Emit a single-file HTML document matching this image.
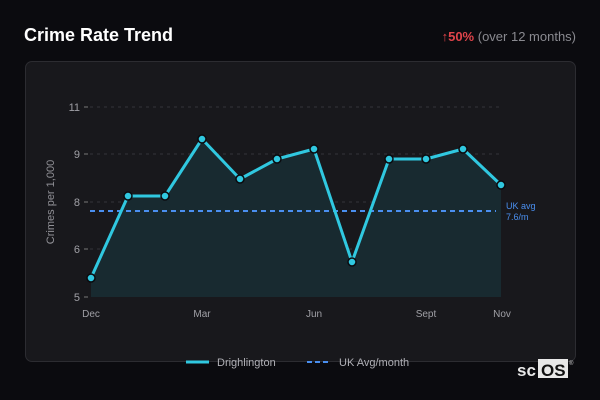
<!DOCTYPE html>
<html><head><meta charset="utf-8"><style>
html,body{margin:0;padding:0;background:#0b0b0f;width:600px;height:400px;overflow:hidden;font-family:"Liberation Sans",sans-serif;}
.t{position:absolute;left:24px;top:25px;color:#fff;font-weight:bold;font-size:18px;}
.r{position:absolute;right:24px;top:29px;font-size:13px;color:#8a8a90;}
.r b{color:#e0444a;}
.card{position:absolute;left:25px;top:61px;width:549px;height:299px;background:#18181c;border:1px solid #2c2c31;border-radius:7px;}
</style></head><body>
<div class="t">Crime Rate Trend</div>
<div class="r"><span style="color:#e0444a">↑</span><b>50%</b> (over 12 months)</div>
<div class="card"></div>
<svg width="600" height="400" style="position:absolute;left:0;top:0" font-family="Liberation Sans, sans-serif">
<g stroke="#34343a" stroke-dasharray="3,4" stroke-width="1">
<line x1="90" y1="107" x2="501" y2="107"/><line x1="90" y1="154" x2="501" y2="154"/><line x1="90" y1="202" x2="501" y2="202"/><line x1="90" y1="249" x2="501" y2="249"/>
</g>
<g stroke="#777" stroke-width="1"><line x1="84" y1="107" x2="88" y2="107"/><line x1="84" y1="154" x2="88" y2="154"/><line x1="84" y1="202" x2="88" y2="202"/><line x1="84" y1="249" x2="88" y2="249"/><line x1="84" y1="297" x2="88" y2="297"/></g>
<g fill="#a0a0a6" font-size="11" text-anchor="end"><text x="80" y="111">11</text><text x="80" y="158">9</text><text x="80" y="206">8</text><text x="80" y="253">6</text><text x="80" y="301">5</text></g>
<text transform="translate(54,202) rotate(-90)" fill="#909096" font-size="11" text-anchor="middle">Crimes per 1,000</text>
<polygon fill="#182a30" points="91,297 91,278 128,196 165,196 202,139 240,179 277,159 314,149 352,262 389,159 426,159 463,149 501,185 501,297"/>
<line x1="90" y1="211" x2="496" y2="211" stroke="#4a8ff0" stroke-width="2" stroke-dasharray="5,4"/>
<polyline fill="none" stroke="#30c8e0" stroke-width="3" stroke-linejoin="round" points="91,278 128,196 165,196 202,139 240,179 277,159 314,149 352,262 389,159 426,159 463,149 501,185"/>
<g fill="#30c8e0" stroke="#0b0b0f" stroke-width="1.5">
<circle cx="91" cy="278" r="4"/><circle cx="128" cy="196" r="4"/><circle cx="165" cy="196" r="4"/><circle cx="202" cy="139" r="4"/><circle cx="240" cy="179" r="4"/><circle cx="277" cy="159" r="4"/><circle cx="314" cy="149" r="4"/><circle cx="352" cy="262" r="4"/><circle cx="389" cy="159" r="4"/><circle cx="426" cy="159" r="4"/><circle cx="463" cy="149" r="4"/><circle cx="501" cy="185" r="4"/>
</g>
<text x="506" y="209" fill="#4a8ff0" font-size="9">UK avg</text>
<text x="506" y="220" fill="#4a8ff0" font-size="9">7.6/m</text>
<g fill="#a0a0a6" font-size="10" text-anchor="middle"><text x="91" y="317">Dec</text><text x="202" y="317">Mar</text><text x="314" y="317">Jun</text><text x="426" y="317">Sept</text><text x="502" y="317">Nov</text></g>
<line x1="186" y1="362" x2="209" y2="362" stroke="#30c8e0" stroke-width="3"/>
<text x="217" y="366" fill="#b0b0b6" font-size="11">Drighlington</text>
<line x1="307" y1="362" x2="330" y2="362" stroke="#4a8ff0" stroke-width="2" stroke-dasharray="5,3"/>
<text x="339" y="366" fill="#b0b0b6" font-size="11">UK Avg/month</text>
<text x="517" y="376" fill="#e8e8e8" font-size="17" font-weight="bold">sc</text>
<rect x="538" y="359" width="30" height="19" fill="#e8e8e8"/>
<text x="541" y="376" fill="#111" font-size="17" font-weight="bold">OS</text>
<text x="569" y="365" fill="#ccc" font-size="6">®</text>
</svg>
</body></html>
